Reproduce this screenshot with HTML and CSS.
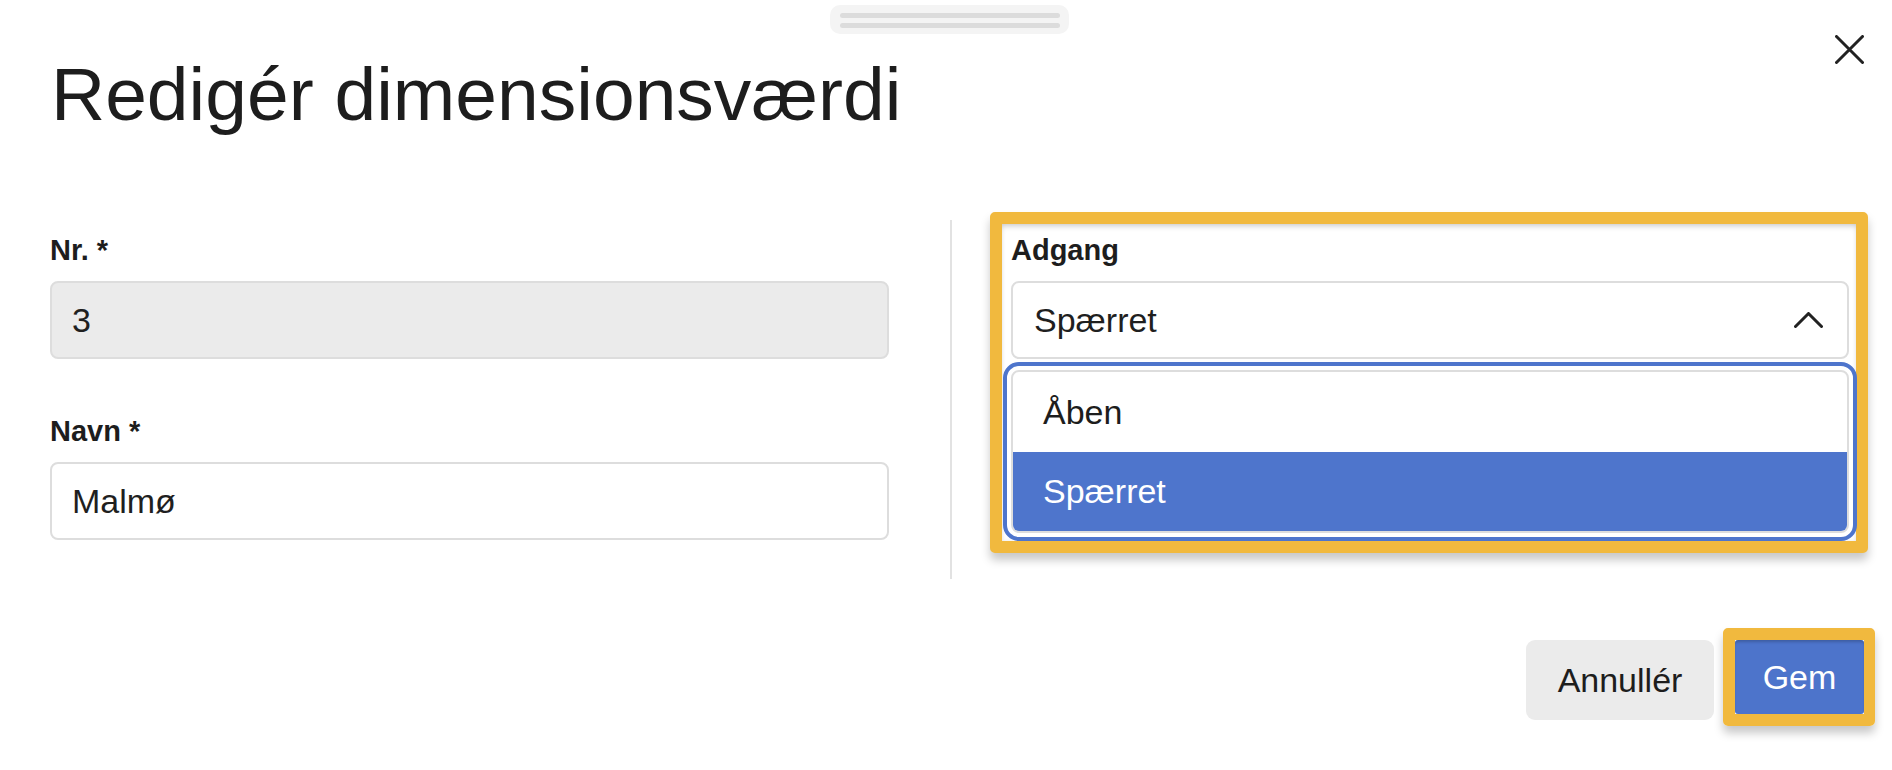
FILE: index.html
```html
<!DOCTYPE html>
<html lang="da">
<head>
<meta charset="utf-8">
<title>Redigér dimensionsværdi</title>
<link rel="stylesheet" href="styles.css">
</head>
<body>
<div class="sheet">
  <div class="handle"><span class="handle-line"></span><span class="handle-line"></span></div>
  <button class="close" aria-label="Luk">
    <svg width="29" height="29" viewBox="0 0 29 29"><path d="M1.5 1.5 L27.5 27.5 M27.5 1.5 L1.5 27.5" stroke="#222" stroke-width="3" stroke-linecap="round" fill="none"/></svg>
  </button>
  <h1 class="title">Redigér dimensionsværdi</h1>

  <div class="form-row">
    <div class="col-left">
      <label class="label">Nr. *</label>
      <div class="input input-disabled">3</div>
      <label class="label label-second">Navn *</label>
      <div class="input">Malmø</div>
    </div>
    <div class="divider"></div>
    <div class="highlight">
      <label class="label">Adgang</label>
      <div class="select">
        <span>Spærret</span>
        <svg class="chevron" width="29" height="16" viewBox="0 0 29 16"><polyline points="1.5,14.5 14.5,1.5 27.5,14.5" stroke="#222" stroke-width="3" fill="none" stroke-linecap="round" stroke-linejoin="round"/></svg>
      </div>
      <ul class="options">
        <li class="option">Åben</li>
        <li class="option option-selected">Spærret</li>
      </ul>
    </div>
  </div>

  <div class="footer">
    <button class="btn btn-cancel">Annullér</button>
    <div class="btn-frame"><button class="btn btn-primary">Gem</button></div>
  </div>
</div>
</body>
</html>
```
FILE: styles.css
```css
html, body {
  margin: 0;
  padding: 0;
  background: #ffffff;
}
body {
  font-family: "Liberation Sans", Arial, Helvetica, sans-serif;
  color: #1f1f1f;
  width: 1892px;
  height: 770px;
  overflow: hidden;
}
.sheet {
  position: relative;
  display: flex;
  flex-direction: column;
}
.handle {
  margin: 5px auto 0;
  width: 239px;
  height: 29px;
  box-sizing: border-box;
  padding: 8px 9px 6px 10px;
  background: #f4f4f4;
  border-radius: 10px;
  display: flex;
  flex-direction: column;
  gap: 5px;
  transform: translateX(3px);
}
.handle-line {
  display: block;
  height: 5px;
  background: #dcdcdc;
  border-radius: 3px;
}
.close {
  position: absolute;
  top: 35px;
  right: 28px;
  width: 29px;
  height: 29px;
  padding: 0;
  border: 0;
  background: transparent;
  display: flex;
}
.title {
  margin: 23px 0 0 51px;
  font-size: 75px;
  line-height: 75px;
  font-weight: 400;
  color: #1d1d1d;
}
.form-row {
  display: flex;
  align-items: flex-start;
  margin-top: 80px;
  padding-left: 50px;
}
.col-left {
  width: 839px;
  padding-top: 21px;
  display: flex;
  flex-direction: column;
}
.label {
  display: block;
  font-size: 29px;
  line-height: 34px;
  font-weight: 700;
  color: #1d1d1d;
}
.label-second {
  margin-top: 55px;
}
.input {
  margin-top: 14px;
  height: 78px;
  box-sizing: border-box;
  border: 2px solid #dddddd;
  border-radius: 8px;
  padding: 0 20px;
  display: flex;
  align-items: center;
  font-size: 34px;
  background: #ffffff;
}
.input-disabled {
  background: #ebebeb;
}
.divider {
  width: 2px;
  height: 359px;
  margin: 8px 38px 0 61px;
  background: #e2e2e2;
}
.highlight {
  width: 878px;
  box-sizing: border-box;
  border: 12px solid #f1b93e;
  border-radius: 5px;
  padding: 9px 7px 8px 9px;
  background: #ffffff;
  box-shadow: inset 0 5px 6px -3px rgba(0,0,0,0.18), inset 0 0 5px rgba(0,0,0,0.08), 0 7px 10px rgba(0,0,0,0.22);
}
.select {
  margin-top: 14px;
  height: 78px;
  box-sizing: border-box;
  border: 2px solid #dddddd;
  border-radius: 8px;
  padding: 0 24px 0 21px;
  display: flex;
  align-items: center;
  justify-content: space-between;
  font-size: 34px;
}
.chevron {
  display: block;
}
.options {
  list-style: none;
  margin: 11px 0 0;
  padding: 0;
  border: 2px solid #dddddd;
  border-radius: 8px;
  overflow: hidden;
  outline: 4px solid #4e75cc;
  outline-offset: 4px;
}
.option {
  height: 80px;
  padding-left: 30px;
  display: flex;
  align-items: center;
  font-size: 34px;
  color: #1d1d1d;
}
.option-selected {
  height: 79px;
  background: #4e75cc;
  color: #ffffff;
}
.footer {
  display: flex;
  justify-content: flex-end;
  align-items: flex-start;
  margin-top: 49px;
  padding-right: 17px;
  gap: 9px;
}
.btn {
  font-family: "Liberation Sans", Arial, Helvetica, sans-serif;
  font-size: 34px;
  border: 0;
  padding: 0;
  cursor: pointer;
}
.btn-cancel {
  margin-top: 12px;
  width: 188px;
  height: 80px;
  border-radius: 9px;
  background: #ebebeb;
  color: #1d1d1d;
}
.btn-frame {
  border: 12px solid #f1b93e;
  border-right-width: 11px;
  border-radius: 5px;
  display: flex;
  box-shadow: 0 7px 10px rgba(0,0,0,0.22);
}
.btn-primary {
  width: 129px;
  height: 74px;
  border-radius: 3px;
  background: #4d74cb;
  color: #ffffff;
  box-shadow: inset 0 3px 3px -1px rgba(0,0,0,0.2);
}
```
